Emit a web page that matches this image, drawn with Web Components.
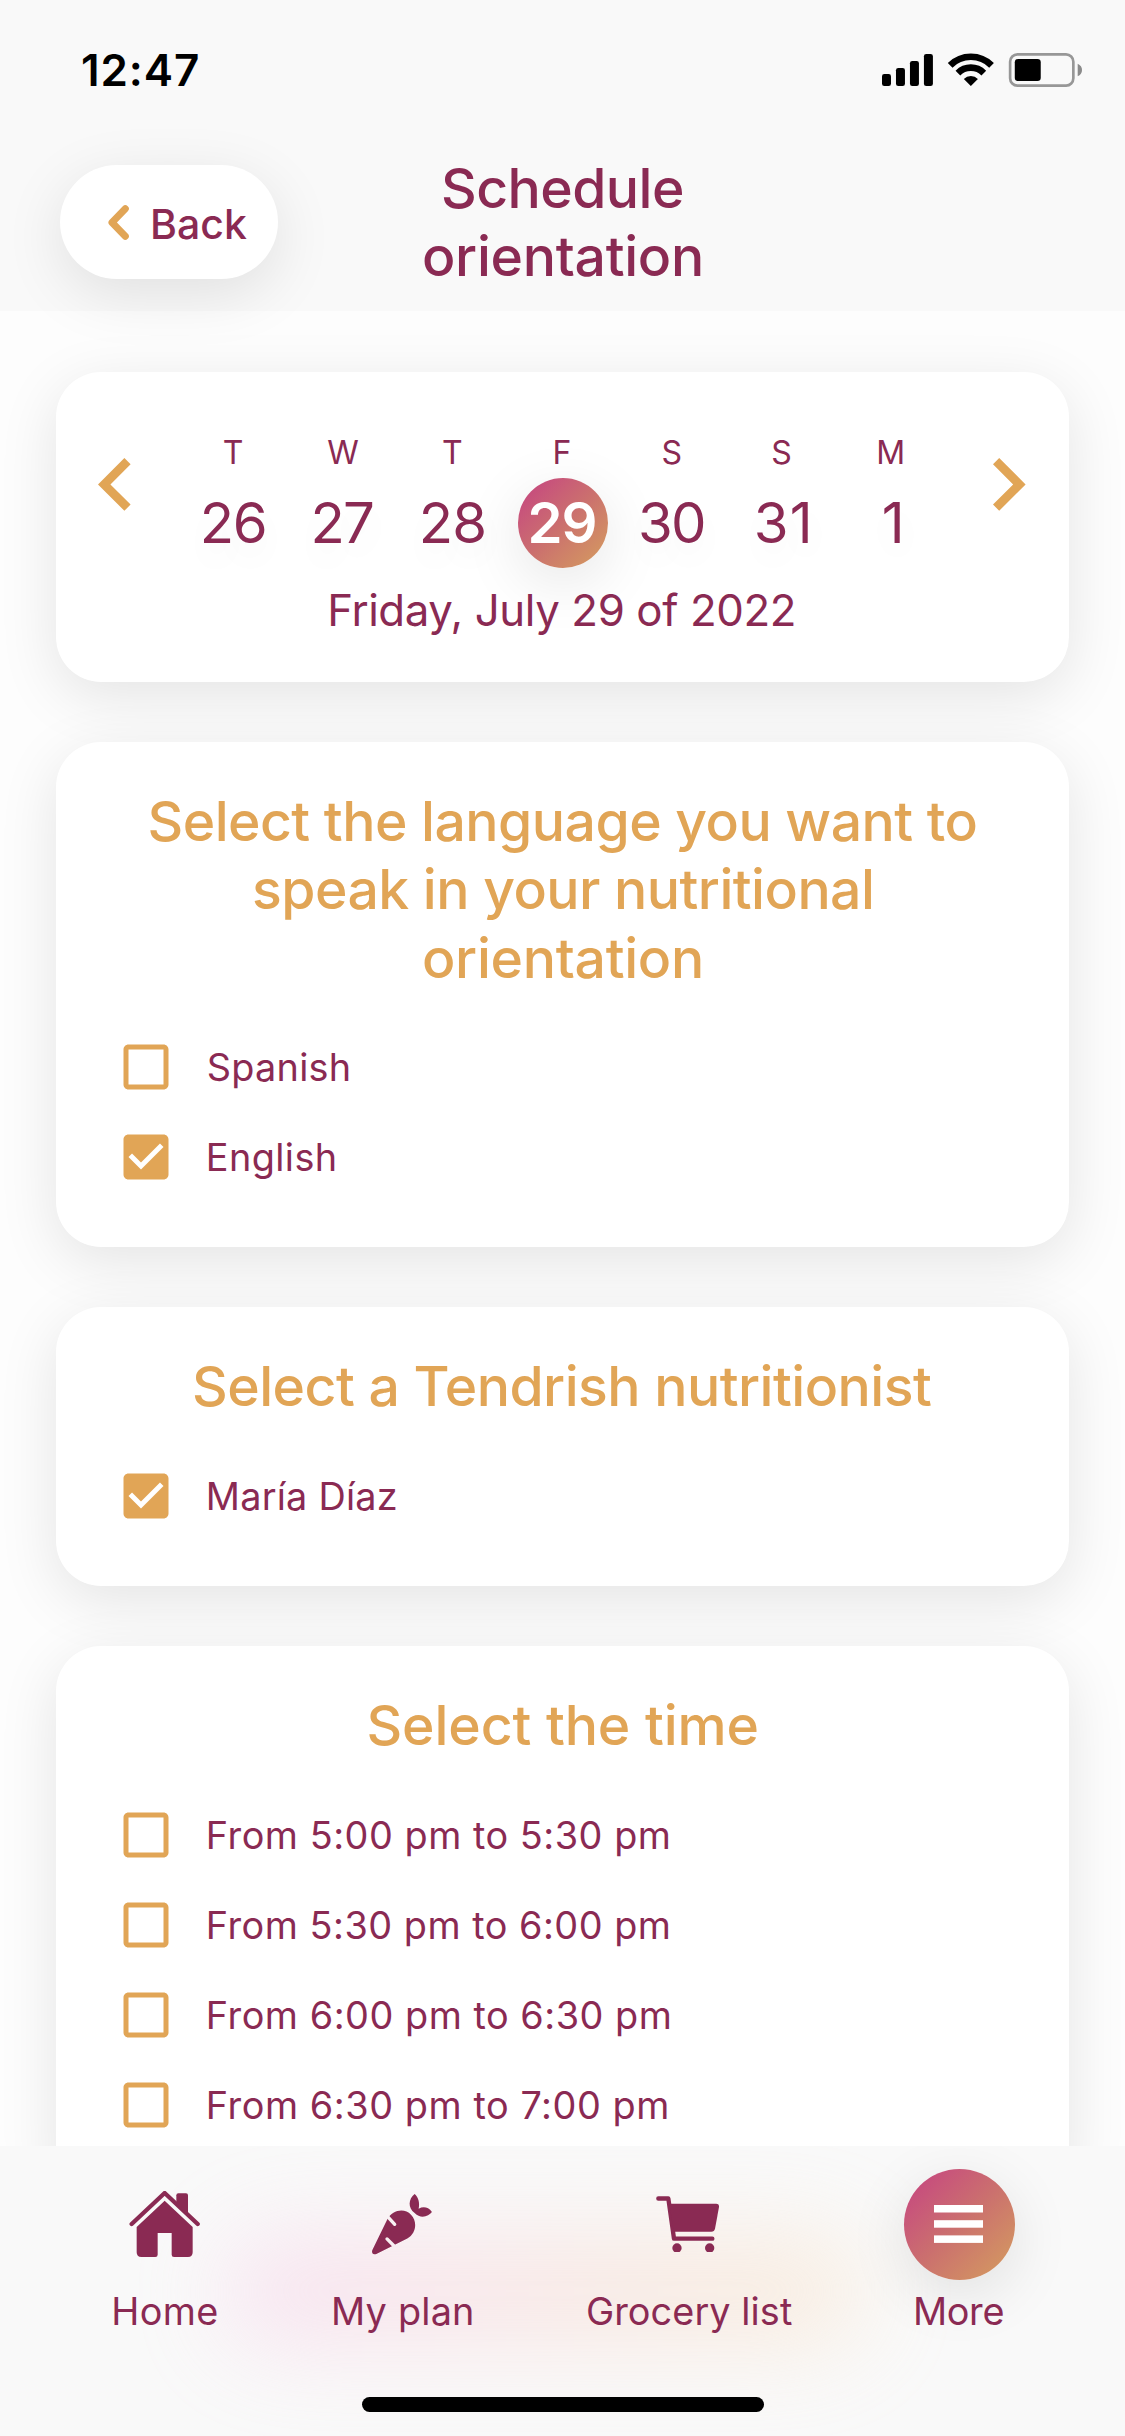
<!DOCTYPE html>
<html lang="en">
<head>
<meta charset="utf-8">
<title>Schedule orientation</title>
<style>
  html, body { margin: 0; padding: 0; }
  body {
    width: 1125px; height: 2436px; overflow: hidden; background: #fdfdfd;
    font-family: Inter, "Liberation Sans", sans-serif; color: #8a2a53;
    --plum: #8a2a53; --gold: #e1a556;
    --shadow: 0 15px 60px rgba(0,0,0,.1);
    --blend: linear-gradient(135deg, #c4407f 0%, #c8567a 22%, #cb706e 50%, #d49a60 95%);
  }
</style>
</head>
<body>
<app-screen>
  <status-bar slot="status"></status-bar>
  <page-header slot="header"></page-header>

  <week-card></week-card>

  <option-card>
    <ink-text slot="title" ink="826">Select the language you want to</ink-text>
    <ink-text slot="title" ink="617">speak in your nutritional</ink-text>
    <ink-text slot="title" ink="277">orientation</ink-text>
    <check-row><ink-text ink="140">Spanish</ink-text></check-row>
    <check-row checked><ink-text ink="126">English</ink-text></check-row>
  </option-card>

  <option-card>
    <ink-text slot="title" ink="737">Select a Tendrish nutritionist</ink-text>
    <check-row checked><ink-text ink="187">María Díaz</ink-text></check-row>
  </option-card>

  <option-card>
    <ink-text slot="title" ink="388">Select the time</ink-text>
    <check-row><ink-text ink="460">From 5:00 pm to 5:30 pm</ink-text></check-row>
    <check-row><ink-text ink="460">From 5:30 pm to 6:00 pm</ink-text></check-row>
    <check-row><ink-text ink="461">From 6:00 pm to 6:30 pm</ink-text></check-row>
    <check-row><ink-text ink="458.5">From 6:30 pm to 7:00 pm</ink-text></check-row>
  </option-card>

  <tab-bar slot="tabs"></tab-bar>
</app-screen>

<script>
const define = (name, html, ready) => customElements.define(name, class extends HTMLElement {
  connectedCallback() {
    if (!this.shadowRoot) this.attachShadow({ mode: 'open' }).innerHTML = html;
    if (ready) ready(this, this.shadowRoot);
  }
});

define('status-bar', `
  <style>
    :host { display: flex; box-sizing: border-box; height: 132px; padding: 7px 43px 0 83px;
      justify-content: space-between; align-items: center; color: #000;
      font-size: 44px; font-weight: 600; line-height: 52px; }
    svg { width: 200px; height: 34px; display: block; }
  </style>
  <ink-text ink="115">12:47</ink-text>
  <svg viewBox="66 66 601 102">
    <g><rect x="66" y="129" width="27" height="36" rx="7"/><rect x="108" y="111" width="27" height="54" rx="7"/>
    <rect x="150" y="90" width="27" height="75" rx="7"/><rect x="192" y="69" width="27" height="96" rx="7"/></g>
    <g fill="none" stroke="#000" stroke-width="20">
      <path d="M270.8 102.8A88 88 0 0 1 395.2 102.8"/><path d="M294.1 126.1A55 55 0 0 1 371.9 126.1"/></g>
    <path d="M333 165L311.8 143.8A30 30 0 0 1 354.2 143.8Z"/>
    <rect x="451" y="70" width="190" height="94" rx="22" fill="none" stroke="#979797" stroke-width="8"/>
    <rect x="465" y="84" width="78" height="66" rx="10"/>
    <path d="M654 98Q667 104 667 117T654 136Z" fill="#8b8b8b"/>
  </svg>`);

define('page-header', `
  <style>
    :host { display: grid; grid-template-columns: 1fr auto 1fr; align-items: center; height: 178px; padding: 1px 60px 0; }
    .back { display: flex; align-items: center; gap: 24px; box-sizing: border-box; width: 218px; height: 114px;
      padding-left: 48px; border-radius: 57px; background: #fff; box-shadow: var(--shadow);
      font-size: 41px; font-weight: 500; line-height: 50px; }
    .back ink-text { padding-top: 4px; }
    svg { width: 21px; height: 35px; display: block; }
    h1 { margin: 0; font-size: 55.3px; font-weight: 500; line-height: 68.33px;
      display: flex; flex-direction: column; align-items: center; }
  </style>
  <div class="back">
    <svg viewBox="0 0 21 35"><path d="M17.3 3.8L4 17.5L17.3 31.2" fill="none" stroke="#e1a556" stroke-width="7" stroke-linecap="round" stroke-linejoin="round"/></svg>
    <ink-text ink="94">Back</ink-text>
  </div>
  <h1><ink-text ink="239">Schedule</ink-text><ink-text ink="277">orientation</ink-text></h1>`);

define('week-day', `
  <style>
    :host { display: flex; flex-direction: column; align-items: center; width: 109.6px; }
    .name { font-size: 32px; line-height: 38px; margin: 0 2px 6px 0; }
    .num { display: flex; align-items: center; justify-content: center; width: 90px; height: 90px;
      border-radius: 50%; font-size: 56.3px; line-height: 68px; text-shadow: 0 15px 30px rgba(0,0,0,.05); }
    :host([selected]) .num { color: #fff; font-weight: 600; text-shadow: none; box-shadow: var(--shadow);
      background: var(--blend); }
  </style>
  <div class="name"></div><div class="num"></div>`, (el, root) => {
  root.querySelector('.name').innerHTML = `<ink-text>${el.getAttribute('name')}</ink-text>`;
  root.querySelector('.num').innerHTML = `<ink-text ink="${el.getAttribute('ink')}">${el.getAttribute('num')}</ink-text>`;
});

define('week-card', `
  <style>
    :host { display: flex; flex-direction: column; align-items: center; box-sizing: border-box; height: 310px;
      padding: 62px 43px 0 42px; border-radius: 45px; background: #fff; box-shadow: var(--shadow); }
    .week { display: flex; justify-content: space-between; width: 100%; }
    .days { display: flex; margin: 0 -1px 0 1px; }
    svg { width: 32.6px; height: 52.8px; margin-top: 24.1px; fill: var(--gold); display: block; }
    .date { font-size: 43.8px; line-height: 52px; margin-top: 17px; }
  </style>
  <div class="week">
    <svg viewBox="8 6 7.41 12"><path d="M15.41 7.41L14 6L8 12L14 18L15.41 16.59L10.83 12Z"/></svg>
    <div class="days">
      <week-day name="T" num="26" ink="61"></week-day>
      <week-day name="W" num="27" ink="58.5"></week-day>
      <week-day name="T" num="28" ink="61.5"></week-day>
      <week-day name="F" num="29" ink="65" selected></week-day>
      <week-day name="S" num="30" ink="63"></week-day>
      <week-day name="S" num="31" ink="51"></week-day>
      <week-day name="M" num="1" ink="17"></week-day>
    </div>
    <svg viewBox="8.59 6 7.41 12"><path d="M8.59 16.59L13.17 12L8.59 7.41L10 6L16 12L10 18Z"/></svg>
  </div>
  <ink-text class="date" ink="463.5">Friday, July 29 of 2022</ink-text>`);

define('option-card', `
  <style>
    :host { display: block; padding: 45px 0; border-radius: 45px; background: #fff; box-shadow: var(--shadow); }
    header { display: flex; flex-direction: column; align-items: center; min-height: 69px; margin-bottom: 30px;
      color: var(--gold); font-size: 55.3px; font-weight: 500; line-height: 68.33px; }
    .rows { padding-left: 60px; font-size: 37.8px; line-height: 46px; }
  </style>
  <header><slot name="title"></slot></header>
  <div class="rows"><slot></slot></div>`);

define('check-row', `
  <style>
    :host { display: flex; align-items: center; height: 90px; gap: 32.8px; }
    svg { width: 60px; height: 60px; fill: var(--gold); display: block; }
    .on { display: none; }
    :host([checked]) .on { display: inline; }
    :host([checked]) .off { display: none; }
  </style>
  <svg viewBox="0 0 24 24">
    <path class="off" d="M19 5v14H5V5h14m0-2H5c-1.1 0-2 .9-2 2v14c0 1.1.9 2 2 2h14c1.1 0 2-.9 2-2V5c0-1.1-.9-2-2-2z"/>
    <path class="on" d="M19 3H5c-1.11 0-2 .9-2 2v14c0 1.1.89 2 2 2h14c1.11 0 2-.9 2-2V5c0-1.1-.89-2-2-2zm-9 14l-5-5 1.41-1.41L10 14.17l7.59-7.59L19 8l-9 9z"/>
  </svg>
  <slot></slot>`);

define('tab-item', `
  <style>
    :host { display: flex; flex-direction: column; align-items: center; gap: 8px; font-size: 37.8px; line-height: 47px; }
    .icon { display: flex; align-items: center; justify-content: center; height: 111px; }
    :host([active]) .icon { width: 111px; border-radius: 50%; box-shadow: var(--shadow);
      background: var(--blend); }
  </style>
  <div class="icon"><slot name="icon"></slot></div>
  <slot></slot>`);

define('tab-bar', `
  <style>
    :host { display: flex; flex-direction: column; align-items: center; height: 290px; position: relative;
      background: #f9f9f9; overflow: hidden; }
    .glow { position: absolute; left: 225px; top: 90px; width: 640px; height: 110px; border-radius: 55px;
      background: linear-gradient(90deg, #f4bfe6, #f8c8d2 35%, #f6cfc0 60%, #f8dcb8); opacity: .38; filter: blur(46px); }
    nav { position: relative; display: flex; justify-content: space-evenly; width: 100%; padding: 23px 0 0 2px; }
    svg { display: block; fill: var(--plum); }
    .home { width: 108px; } .plan { width: 145px; } .list { width: 207px; } .more { width: 111px; }
    .home-indicator { position: relative; width: 402px; height: 15px; border-radius: 8px; background: #000; margin-top: 62px; }
  </style>
  <div class="glow"></div>
  <nav>
    <tab-item class="home">
      <svg slot="icon" width="71" height="66" viewBox="42 33 213 198" style="margin-right:2px;margin-bottom:1px">
        <path d="M50 132L149 39L248 132" fill="none" stroke="#8a2a53" stroke-width="13" stroke-linecap="round" stroke-linejoin="round"/>
        <path d="M184 74V46Q184 40 190 40H213Q219 40 219 46V107Z"/>
        <path d="M149 62L233 141V217Q233 231 219 231H177Q170 231 170 224V159H128V224Q128 231 121 231H79Q65 231 65 217V141Z"/>
      </svg>
      <ink-text ink="103">Home</ink-text>
    </tab-item>
    <tab-item class="plan">
      <svg slot="icon" width="60" height="60.6" viewBox="36 43 180 182" style="margin-right:2px">
        <mask id="cuts"><rect width="300" height="300" fill="#fff"/>
          <path d="M78 106L104 134M81 178L106 203" stroke="#000" stroke-width="10" stroke-linecap="round"/></mask>
        <path mask="url(#cuts)" d="M37 211L82 119C97 90 134 84 153 105C173 125 169 162 142 177L49 223Q41 226 37 221Q35 216 37 211Z"/>
        <path d="M164 43C145 58 143 85 164 100C172 108 180 111 188 111C200 111 210 105 216 97C205 82 190 80 176 87C180 70 175 52 164 43Z"/>
      </svg>
      <ink-text ink="138">My plan</ink-text>
    </tab-item>
    <tab-item class="list">
      <svg slot="icon" width="63" height="56.7" viewBox="887 46 189 170" style="margin-right:4px;margin-bottom:1px">
        <path d="M894 53.5H924L941 174H1056" fill="none" stroke="#8a2a53" stroke-width="13" stroke-linecap="round" stroke-linejoin="round"/>
        <path d="M927 69H1068Q1077 69 1076 79L1064 144Q1062 153 1053 153H940Z"/>
        <circle cx="950" cy="202" r="14"/><circle cx="1048" cy="202" r="14"/>
      </svg>
      <ink-text ink="204">Grocery list</ink-text>
    </tab-item>
    <tab-item class="more" active>
      <svg slot="icon" width="49" height="38" viewBox="0 0 49 38" style="fill:#fff;margin-right:2px;margin-bottom:1px">
        <rect width="49" height="7.5"/><rect y="15.2" width="49" height="7.5"/><rect y="30.4" width="49" height="7.5"/>
      </svg>
      <ink-text ink="87.5">More</ink-text>
    </tab-item>
  </nav>
  <div class="home-indicator"></div>`);

define('app-screen', `
  <style>
    :host { display: flex; flex-direction: column; width: 1125px; height: 2436px; overflow: hidden; }
    .top { position: relative; z-index: 1; background: #f9f9f9; }
    main { flex: 1; min-height: 0; overflow: hidden; display: flex; flex-direction: column; gap: 60px; padding: 61px 56px 0; }
    ::slotted(option-card), ::slotted(week-card) { flex: none; }
  </style>
  <div class="top"><slot name="status"></slot><slot name="header"></slot></div>
  <main><slot></slot></main>
  <slot name="tabs"></slot>`);

/* A single line of text whose box hugs its ink and is tracked to a given ink width.
   Registered last: it reads the font it inherits through its parents' slots. */
const pen = document.createElement('canvas').getContext('2d');
define('ink-text', `
  <style>
    :host { display: block; width: max-content; white-space: nowrap; }
    span { display: block; }
  </style>
  <span><slot></slot></span>`, (el, root) => {
  const s = getComputedStyle(el);
  const text = el.textContent;
  pen.font = `${s.fontWeight} ${s.fontSize} Inter`;
  const m = pen.measureText(text);
  const ink = m.actualBoundingBoxRight + m.actualBoundingBoxLeft;
  const want = parseFloat(el.getAttribute('ink')) || ink;
  const ls = text.length > 1 ? (want - ink) / (text.length - 1) : 0;
  const span = root.querySelector('span');
  span.style.letterSpacing = ls + 'px';
  span.style.marginLeft = m.actualBoundingBoxLeft + 'px';
  span.style.marginRight = -(m.width - m.actualBoundingBoxRight + ls) + 'px';
});
</script>
</body>
</html>
